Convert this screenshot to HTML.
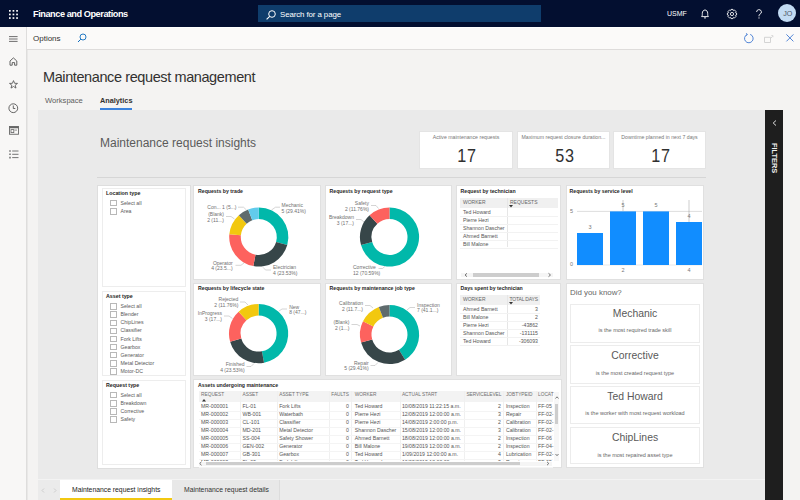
<!DOCTYPE html>
<html><head><meta charset="utf-8">
<style>
*{margin:0;padding:0;box-sizing:border-box}
html,body{width:800px;height:500px;overflow:hidden;background:#f4f3f2;font-family:"Liberation Sans",sans-serif;color:#333}
.a{position:absolute}
#top{left:0;top:0;width:800px;height:27px;background:#030f30}
#nav{left:0;top:27px;width:27px;height:473px;background:#f8f7f6;border-right:1px solid #dedddc;box-shadow:1px 0 0 #e9e8e7}
#opt{left:27px;top:27px;width:773px;height:23px;background:#fbfaf9;border-top:1px solid #fff;border-bottom:1px solid #dedcdb}
#report{left:38px;top:110px;width:727px;height:370px;background:#eaeaea}
#filters{left:765px;top:110px;width:18px;height:390px;background:#1e1e1e}
#tabbar{left:38px;top:479px;width:727px;height:21px;background:#ebebeb;border-top:1px solid #f3f3f3}
.box{position:absolute;background:#fff;border:1px solid #e3e3e3}
.t{position:absolute;white-space:nowrap;line-height:1}
.ttl{font-size:5.3px;font-weight:bold;color:#252423}
svg{position:absolute;overflow:visible}
</style></head><body>
<!-- TOP BAR -->
<div id="top" class="a">
  <svg style="left:9px;top:9.5px" width="9" height="9" viewBox="0 0 9 9"><g fill="#fff"><rect x="0" y="0" width="1.7" height="1.7"/><rect x="3.6" y="0" width="1.7" height="1.7"/><rect x="7.2" y="0" width="1.7" height="1.7"/><rect x="0" y="3.6" width="1.7" height="1.7"/><rect x="3.6" y="3.6" width="1.7" height="1.7"/><rect x="7.2" y="3.6" width="1.7" height="1.7"/><rect x="0" y="7.2" width="1.7" height="1.7"/><rect x="3.6" y="7.2" width="1.7" height="1.7"/><rect x="7.2" y="7.2" width="1.7" height="1.7"/></g></svg>
  <div class="t" style="left:33px;top:9.5px;font-size:9.2px;font-weight:bold;color:#fff;letter-spacing:-0.45px">Finance and Operations</div>
  <div class="a" style="left:258px;top:5px;width:283px;height:17px;background:#0f3d6c"></div>
  <svg style="left:265.5px;top:9.5px" width="10" height="10" viewBox="0 0 10 10"><circle cx="6" cy="4" r="3.3" fill="none" stroke="#fff" stroke-width="1"/><path d="M3.7 6.3 L0.6 9.4" stroke="#fff" stroke-width="1.1"/></svg>
  <div class="t" style="left:280px;top:10.6px;font-size:7.9px;color:#fff;letter-spacing:-0.1px">Search for a page</div>
  <div class="t" style="left:667px;top:9.5px;font-size:7px;color:#fff">USMF</div>
  <svg style="left:700px;top:8.5px" width="10" height="10" viewBox="0 0 10 10"><path d="M1.6 7.6C2.4 6.8 2.3 6 2.3 4.3C2.3 2.4 3.5 1 5 1C6.5 1 7.7 2.4 7.7 4.3C7.7 6 7.6 6.8 8.4 7.6Z" fill="none" stroke="#fff" stroke-width="0.9" stroke-linejoin="round"/><path d="M4 8.9H6" stroke="#fff" stroke-width="0.9"/></svg>
  <svg style="left:727px;top:8.5px" width="10" height="10" viewBox="0 0 10 10"><path d="M9.59 3.97L9.59 6.03L8.46 6.30L8.37 6.53L8.97 7.52L7.52 8.97L6.53 8.37L6.30 8.46L6.03 9.59L3.97 9.59L3.70 8.46L3.47 8.37L2.48 8.97L1.03 7.52L1.63 6.53L1.54 6.30L0.41 6.03L0.41 3.97L1.54 3.70L1.63 3.47L1.03 2.48L2.48 1.03L3.47 1.63L3.70 1.54L3.97 0.41L6.03 0.41L6.30 1.54L6.53 1.63L7.52 1.03L8.97 2.48L8.37 3.47L8.46 3.70Z" fill="none" stroke="#fff" stroke-width="0.85" stroke-linejoin="round"/><circle cx="5" cy="5" r="1.6" fill="none" stroke="#fff" stroke-width="0.85"/></svg>
  <svg style="left:755px;top:8.5px" width="8" height="10" viewBox="0 0 8 10"><path d="M1.6 3A2.4 2.4 0 1 1 5 5.2C4.2 5.6 4 6 4 6.8V7.3" fill="none" stroke="#fff" stroke-width="0.9"/><circle cx="4" cy="8.9" r="0.55" fill="#fff"/></svg>
  <div class="a" style="left:778px;top:4px;width:18px;height:18px;border-radius:50%;background:#c2dbf3"></div>
  <div class="t" style="left:783.3px;top:10px;font-size:7.2px;color:#505866;letter-spacing:-0.2px">JO</div>
</div>
<!-- NAV -->
<div id="nav" class="a">
  <svg style="left:9px;top:8.5px" width="9" height="6" viewBox="0 0 9 6"><path d="M0 0.6H8.6M0 3H8.6M0 5.4H8.6" stroke="#555" stroke-width="0.85"/></svg>
  <svg style="left:9px;top:29.8px" width="9" height="9" viewBox="0 0 9 9"><path d="M1 8.2V4L4.4 0.9L7.8 4V8.2H5.6V5.6H3.2V8.2Z" fill="none" stroke="#555" stroke-width="0.9" stroke-linejoin="round"/></svg>
  <svg style="left:9px;top:53px" width="9" height="9" viewBox="0 0 9 9"><path d="M4.5 0.6L5.6 3.3L8.5 3.4L6.2 5.2L7 8.1L4.5 6.5L2 8.1L2.8 5.2L0.5 3.4L3.4 3.3Z" fill="none" stroke="#555" stroke-width="0.85" stroke-linejoin="round"/></svg>
  <svg style="left:8px;top:75.5px" width="11" height="11" viewBox="0 0 11 11"><circle cx="5.3" cy="5.2" r="4.4" fill="none" stroke="#555" stroke-width="0.9"/><path d="M5.3 2.5V5.5H7.3" fill="none" stroke="#555" stroke-width="0.9"/></svg>
  <svg style="left:8.5px;top:99px" width="10" height="9" viewBox="0 0 10 9"><rect x="0.45" y="0.45" width="9" height="7.8" fill="none" stroke="#666" stroke-width="0.9"/><rect x="0.45" y="0.45" width="9" height="1.8" fill="#666"/><rect x="2" y="3.6" width="2.8" height="3" fill="none" stroke="#666" stroke-width="0.8"/><path d="M5.5 4.1H8" stroke="#666" stroke-width="0.7"/></svg>
  <svg style="left:8.5px;top:122.5px" width="10" height="9" viewBox="0 0 10 9"><path d="M3.2 1H9.5M3.2 4.3H9.5M3.2 7.6H9.5" stroke="#666" stroke-width="0.9"/><path d="M1 0.2V8.4" stroke="#666" stroke-width="1.4" stroke-dasharray="1.6 1.7"/></svg>
</div>
<!-- OPTIONS BAR -->
<div id="opt" class="a">
  <div class="t" style="left:6px;top:7.3px;font-size:8px;color:#323130">Options</div>
  <svg style="left:50px;top:5px" width="10" height="10" viewBox="0 0 10 10"><circle cx="6" cy="4" r="3" fill="none" stroke="#0f6cbd" stroke-width="0.9"/><path d="M3.8 6.2L1 9" stroke="#0f6cbd" stroke-width="1"/></svg>
  <svg style="left:716px;top:4.5px" width="11" height="11" viewBox="0 0 11 11"><path d="M4.2 1.5A4.3 4.3 0 1 0 7.2 1.4" fill="none" stroke="#4a7fd4" stroke-width="0.95"/><path d="M3.2 0.2L4.4 1.6L2.8 2.6" fill="none" stroke="#4a7fd4" stroke-width="0.9"/></svg>
  <svg style="left:737px;top:6px" width="10" height="9" viewBox="0 0 10 9"><path d="M0.5 3.3H6.5V8.5H0.5Z" fill="none" stroke="#cfcfcf" stroke-width="0.9"/><path d="M6.5 4.5L8.5 2.5M7.3 1.6H8.9V3.2" fill="none" stroke="#cfcfcf" stroke-width="0.8"/></svg>
  <svg style="left:758.8px;top:6px" width="8" height="8" viewBox="0 0 8 8"><path d="M0.4 0.4L7.4 7.4M7.4 0.4L0.4 7.4" stroke="#4a7fd4" stroke-width="0.95"/></svg>
</div>
<!-- PAGE HEADER -->
<div class="t" style="left:43px;top:69.7px;font-size:14.5px;letter-spacing:-0.4px;color:#323130">Maintenance request management</div>
<div class="t" style="left:45px;top:96.5px;font-size:7.6px;color:#605e5c">Workspace</div>
<div class="t" style="left:100px;top:96.5px;font-size:7.3px;font-weight:bold;color:#323130">Analytics</div>
<div class="a" style="left:100px;top:107.7px;width:32px;height:2px;background:#3b82dc"></div>

<!-- REPORT -->
<div id="report" class="a"></div>
<div class="t" style="top:137.35px;font-size:12px;color:#5a5a5a;left:100.00px;">Maintenance request insights</div><div class="a" style="left:419px;top:131px;width:94px;height:38px;background:#fff;border:1px solid #e4e4e4;"></div><div class="t" style="top:134.60px;font-size:5.2px;color:#777;left:466.00px;transform:translateX(-50%);">Active maintenance requests</div><div class="t" style="top:146.97px;font-size:18px;color:#303030;left:467.00px;transform:translateX(-50%);transform:translateX(-50%) scaleX(0.9);letter-spacing:0.8px;">17</div><div class="a" style="left:517px;top:131px;width:93px;height:38px;background:#fff;border:1px solid #e4e4e4;"></div><div class="t" style="top:134.60px;font-size:5.2px;color:#777;left:563.50px;transform:translateX(-50%);">Maximum request closure duration...</div><div class="t" style="top:146.97px;font-size:18px;color:#303030;left:564.50px;transform:translateX(-50%);transform:translateX(-50%) scaleX(0.9);letter-spacing:0.8px;">53</div><div class="a" style="left:613px;top:131px;width:93px;height:38px;background:#fff;border:1px solid #e4e4e4;"></div><div class="t" style="top:134.60px;font-size:5.2px;color:#777;left:659.50px;transform:translateX(-50%);">Downtime planned in next 7 days</div><div class="t" style="top:146.97px;font-size:18px;color:#303030;left:660.50px;transform:translateX(-50%);transform:translateX(-50%) scaleX(0.9);letter-spacing:0.8px;">17</div><div class="a" style="left:97px;top:177px;width:609px;height:1px;background:#d6d6d6;"></div><div class="a" style="left:97px;top:185px;width:94px;height:284px;background:#fff;border:1px solid #dedede;"></div><div class="a" style="left:102px;top:188px;width:84px;height:99px;background:#fff;border:1px solid #ededed;"></div><div class="a" style="left:102px;top:291px;width:84px;height:85px;background:#fff;border:1px solid #ededed;"></div><div class="a" style="left:102px;top:380px;width:84px;height:85px;background:#fff;border:1px solid #ededed;"></div><div class="t" style="top:190.82px;font-size:5.3px;color:#252423;font-weight:bold;left:106.00px;">Location type</div><div class="a" style="left:110px;top:200.10000000000002px;width:6.5px;height:6.399999999999977px;background:#fff;border:1px solid #b8b8b8;"></div><div class="t" style="top:200.80px;font-size:5.2px;color:#5a5a5a;left:120.50px;">Select all</div><div class="a" style="left:110px;top:208.25000000000003px;width:6.5px;height:6.399999999999977px;background:#fff;border:1px solid #b8b8b8;"></div><div class="t" style="top:208.95px;font-size:5.2px;color:#5a5a5a;left:120.50px;">Area</div><div class="t" style="top:293.52px;font-size:5.3px;color:#252423;font-weight:bold;left:106.00px;">Asset type</div><div class="a" style="left:110px;top:303.2px;width:6.5px;height:6.399999999999977px;background:#fff;border:1px solid #b8b8b8;"></div><div class="t" style="top:303.90px;font-size:5.2px;color:#5a5a5a;left:120.50px;">Select all</div><div class="a" style="left:110px;top:311.34999999999997px;width:6.5px;height:6.399999999999977px;background:#fff;border:1px solid #b8b8b8;"></div><div class="t" style="top:312.05px;font-size:5.2px;color:#5a5a5a;left:120.50px;">Blender</div><div class="a" style="left:110px;top:319.5px;width:6.5px;height:6.399999999999977px;background:#fff;border:1px solid #b8b8b8;"></div><div class="t" style="top:320.20px;font-size:5.2px;color:#5a5a5a;left:120.50px;">ChipLines</div><div class="a" style="left:110px;top:327.65px;width:6.5px;height:6.399999999999977px;background:#fff;border:1px solid #b8b8b8;"></div><div class="t" style="top:328.35px;font-size:5.2px;color:#5a5a5a;left:120.50px;">Classifier</div><div class="a" style="left:110px;top:335.8px;width:6.5px;height:6.399999999999977px;background:#fff;border:1px solid #b8b8b8;"></div><div class="t" style="top:336.50px;font-size:5.2px;color:#5a5a5a;left:120.50px;">Fork Lifts</div><div class="a" style="left:110px;top:343.95px;width:6.5px;height:6.399999999999977px;background:#fff;border:1px solid #b8b8b8;"></div><div class="t" style="top:344.65px;font-size:5.2px;color:#5a5a5a;left:120.50px;">Gearbox</div><div class="a" style="left:110px;top:352.09999999999997px;width:6.5px;height:6.399999999999977px;background:#fff;border:1px solid #b8b8b8;"></div><div class="t" style="top:352.80px;font-size:5.2px;color:#5a5a5a;left:120.50px;">Generator</div><div class="a" style="left:110px;top:360.25px;width:6.5px;height:6.399999999999977px;background:#fff;border:1px solid #b8b8b8;"></div><div class="t" style="top:360.95px;font-size:5.2px;color:#5a5a5a;left:120.50px;">Metal Detector</div><div class="a" style="left:110px;top:368.4px;width:6.5px;height:6.399999999999977px;background:#fff;border:1px solid #b8b8b8;"></div><div class="t" style="top:369.10px;font-size:5.2px;color:#5a5a5a;left:120.50px;">Motor-DC</div><div class="t" style="top:382.52px;font-size:5.3px;color:#252423;font-weight:bold;left:106.00px;">Request type</div><div class="a" style="left:110px;top:392.0px;width:6.5px;height:6.399999999999977px;background:#fff;border:1px solid #b8b8b8;"></div><div class="t" style="top:392.70px;font-size:5.2px;color:#5a5a5a;left:120.50px;">Select all</div><div class="a" style="left:110px;top:400.15px;width:6.5px;height:6.399999999999977px;background:#fff;border:1px solid #b8b8b8;"></div><div class="t" style="top:400.85px;font-size:5.2px;color:#5a5a5a;left:120.50px;">Breakdown</div><div class="a" style="left:110px;top:408.3px;width:6.5px;height:6.399999999999977px;background:#fff;border:1px solid #b8b8b8;"></div><div class="t" style="top:409.00px;font-size:5.2px;color:#5a5a5a;left:120.50px;">Corrective</div><div class="a" style="left:110px;top:416.45px;width:6.5px;height:6.399999999999977px;background:#fff;border:1px solid #b8b8b8;"></div><div class="t" style="top:417.15px;font-size:5.2px;color:#5a5a5a;left:120.50px;">Safety</div><div class="a" style="left:193px;top:185px;width:128px;height:95px;background:#fff;border:1px solid #e0e0e0;"></div><div class="a" style="left:325px;top:185px;width:127px;height:95px;background:#fff;border:1px solid #e0e0e0;"></div><div class="a" style="left:456px;top:185px;width:105px;height:95px;background:#fff;border:1px solid #e0e0e0;"></div><div class="a" style="left:566px;top:185px;width:138px;height:95px;background:#fff;border:1px solid #e0e0e0;"></div><div class="a" style="left:193px;top:283px;width:128px;height:93px;background:#fff;border:1px solid #e0e0e0;"></div><div class="a" style="left:325px;top:283px;width:127px;height:93px;background:#fff;border:1px solid #e0e0e0;"></div><div class="a" style="left:456px;top:283px;width:105px;height:93px;background:#fff;border:1px solid #e0e0e0;"></div><div class="a" style="left:566px;top:283px;width:138px;height:185px;background:#fff;border:1px solid #e0e0e0;"></div><div class="a" style="left:193px;top:379px;width:369px;height:89px;background:#fff;border:1px solid #e0e0e0;"></div><div class="t" style="top:189.20px;font-size:5.2px;color:#252423;font-weight:bold;left:198.00px;">Requests by trade</div><div class="t" style="top:189.20px;font-size:5.2px;color:#252423;font-weight:bold;left:329.50px;">Requests by request type</div><div class="t" style="top:189.20px;font-size:5.2px;color:#252423;font-weight:bold;left:460.50px;">Request by technician</div><div class="t" style="top:189.00px;font-size:5.2px;color:#252423;font-weight:bold;left:569.50px;">Requests by service level</div><div class="t" style="top:286.20px;font-size:5.2px;color:#252423;font-weight:bold;left:198.00px;">Requests by lifecycle state</div><div class="t" style="top:286.20px;font-size:5.2px;color:#252423;font-weight:bold;left:329.50px;">Requests by maintenance job type</div><div class="t" style="top:286.20px;font-size:5.2px;color:#252423;font-weight:bold;left:460.50px;">Days spent by technician</div><div class="t" style="top:382.50px;font-size:5.2px;color:#252423;font-weight:bold;left:198.00px;">Assets undergoing maintenance</div><svg class="a" style="left:0;top:0" width="800" height="500" viewBox="0 0 800 500"><path d="M258.80 207.40A29.6 29.6 0 0 1 287.27 245.10L276.11 241.93A18 18 0 0 0 258.80 219.00Z" fill="#01b8aa"/><path d="M287.27 245.10A29.6 29.6 0 0 1 253.36 266.10L255.49 254.69A18 18 0 0 0 276.11 241.93Z" fill="#374649"/><path d="M253.36 266.10A29.6 29.6 0 0 1 229.33 234.27L240.88 235.34A18 18 0 0 0 255.49 254.69Z" fill="#fd625e"/><path d="M229.33 234.27A29.6 29.6 0 0 1 238.86 215.13L246.67 223.70A18 18 0 0 0 240.88 235.34Z" fill="#f2c80f"/><path d="M238.86 215.13A29.6 29.6 0 0 1 248.11 209.40L252.30 220.22A18 18 0 0 0 246.67 223.70Z" fill="#5f6b6d"/><path d="M248.11 209.40A29.6 29.6 0 0 1 258.80 207.40L258.80 219.00A18 18 0 0 0 252.30 220.22Z" fill="#62cbec"/><path d="M389.50 207.40A29.6 29.6 0 1 1 361.03 245.10L372.19 241.93A18 18 0 1 0 389.50 219.00Z" fill="#01b8aa"/><path d="M361.03 245.10A29.6 29.6 0 0 1 369.56 215.13L377.37 223.70A18 18 0 0 0 372.19 241.93Z" fill="#374649"/><path d="M369.56 215.13A29.6 29.6 0 0 1 389.50 207.40L389.50 219.00A18 18 0 0 0 377.37 223.70Z" fill="#fd625e"/><path d="M258.60 304.00A29.6 29.6 0 0 1 264.04 362.70L261.91 351.29A18 18 0 0 0 258.60 315.60Z" fill="#01b8aa"/><path d="M264.04 362.70A29.6 29.6 0 0 1 230.13 341.70L241.29 338.53A18 18 0 0 0 261.91 351.29Z" fill="#374649"/><path d="M230.13 341.70A29.6 29.6 0 0 1 238.66 311.73L246.47 320.30A18 18 0 0 0 241.29 338.53Z" fill="#fd625e"/><path d="M238.66 311.73A29.6 29.6 0 0 1 258.60 304.00L258.60 315.60A18 18 0 0 0 246.47 320.30Z" fill="#f2c80f"/><path d="M389.50 304.90A29.6 29.6 0 0 1 405.08 359.67L398.98 349.80A18 18 0 0 0 389.50 316.50Z" fill="#01b8aa"/><path d="M405.08 359.67A29.6 29.6 0 0 1 361.03 342.60L372.19 339.43A18 18 0 0 0 398.98 349.80Z" fill="#374649"/><path d="M361.03 342.60A29.6 29.6 0 0 1 363.00 321.31L373.39 326.48A18 18 0 0 0 372.19 339.43Z" fill="#fd625e"/><path d="M363.00 321.31A29.6 29.6 0 0 1 378.81 306.90L383.00 317.72A18 18 0 0 0 373.39 326.48Z" fill="#f2c80f"/><path d="M378.81 306.90A29.6 29.6 0 0 1 389.50 304.90L389.50 316.50A18 18 0 0 0 383.00 317.72Z" fill="#5f6b6d"/><path d="M280 207.2L275.5 207.2L271.5 210" stroke="#b8b8b8" stroke-width="0.6" fill="none"/><path d="M238 207.2L243.5 207.2L246.5 210" stroke="#b8b8b8" stroke-width="0.6" fill="none"/><path d="M226 216.5L231 216.5L234.5 219" stroke="#b8b8b8" stroke-width="0.6" fill="none"/><path d="M235.5 265.3L241 265.3L244 263" stroke="#b8b8b8" stroke-width="0.6" fill="none"/><path d="M271 270L265.5 270L263 267.3" stroke="#b8b8b8" stroke-width="0.6" fill="none"/><path d="M371 205.5L376 205.5L378.5 208.5" stroke="#b8b8b8" stroke-width="0.6" fill="none"/><path d="M356 219.5L361 219.5L364 222" stroke="#b8b8b8" stroke-width="0.6" fill="none"/><path d="M378.5 268.5L382.5 268.5L385 266.3" stroke="#b8b8b8" stroke-width="0.6" fill="none"/><path d="M240 302L245 302L248 305" stroke="#b8b8b8" stroke-width="0.6" fill="none"/><path d="M224 316L229 316L232.5 318.5" stroke="#b8b8b8" stroke-width="0.6" fill="none"/><path d="M287 309L282 309L279 311" stroke="#b8b8b8" stroke-width="0.6" fill="none"/><path d="M246.5 366.5L251 366.5L254 363.5" stroke="#b8b8b8" stroke-width="0.6" fill="none"/><path d="M365 305.5L370 305.5L373 308" stroke="#b8b8b8" stroke-width="0.6" fill="none"/><path d="M351.5 324.5L357 324.5L360 326" stroke="#b8b8b8" stroke-width="0.6" fill="none"/><path d="M415 307.5L410 307.5L407 310" stroke="#b8b8b8" stroke-width="0.6" fill="none"/><path d="M370.5 365.5L375 365.5L378 362.5" stroke="#b8b8b8" stroke-width="0.6" fill="none"/><path d="M577 211.4H702" stroke="#d0d0d0" stroke-width="0.7"/><path d="M577 265H702" stroke="#e0e0e0" stroke-width="0.7"/><rect x="577" y="233" width="26" height="32" fill="#118dff"/><rect x="610" y="211.4" width="26" height="53.599999999999994" fill="#118dff"/><rect x="643" y="211.4" width="26" height="53.599999999999994" fill="#118dff"/><rect x="676" y="222" width="26" height="43" fill="#118dff"/><path d="M623 200V211M689 200V222" stroke="#999" stroke-width="0.5"/></svg><div class="t" style="top:202.97px;font-size:5px;color:#707070;left:281.50px;">Mechanic</div><div class="t" style="top:208.67px;font-size:5px;color:#707070;left:281.50px;">5 (29.41%)</div><div class="t" style="top:204.97px;font-size:5px;color:#707070;right:563.50px;">Con... 1 (5...)</div><div class="t" style="top:211.97px;font-size:5px;color:#707070;right:576.00px;">(Blank)</div><div class="t" style="top:217.67px;font-size:5px;color:#707070;right:576.00px;">2 (11...)</div><div class="t" style="top:260.57px;font-size:5px;color:#707070;right:567.40px;">Operator</div><div class="t" style="top:266.27px;font-size:5px;color:#707070;right:567.40px;">4 (23.5...)</div><div class="t" style="top:265.17px;font-size:5px;color:#707070;left:273.00px;">Electrician</div><div class="t" style="top:270.87px;font-size:5px;color:#707070;left:273.00px;">4 (23.53%)</div><div class="t" style="top:200.97px;font-size:5px;color:#707070;right:431.00px;">Safety</div><div class="t" style="top:206.67px;font-size:5px;color:#707070;right:431.00px;">2 (11.76%)</div><div class="t" style="top:214.97px;font-size:5px;color:#707070;right:446.00px;">Breakdown</div><div class="t" style="top:220.67px;font-size:5px;color:#707070;right:446.00px;">3 (17...)</div><div class="t" style="top:265.17px;font-size:5px;color:#707070;left:353.00px;">Corrective</div><div class="t" style="top:270.87px;font-size:5px;color:#707070;left:353.00px;">12 (70.59%)</div><div class="t" style="top:297.37px;font-size:5px;color:#707070;right:561.70px;">Rejected</div><div class="t" style="top:303.07px;font-size:5px;color:#707070;right:561.70px;">2 (11.76%)</div><div class="t" style="top:311.47px;font-size:5px;color:#707070;right:578.00px;">InProgress</div><div class="t" style="top:317.17px;font-size:5px;color:#707070;right:578.00px;">3 (17...)</div><div class="t" style="top:304.57px;font-size:5px;color:#707070;left:289.20px;">New</div><div class="t" style="top:310.27px;font-size:5px;color:#707070;left:289.20px;">8 (47...)</div><div class="t" style="top:361.87px;font-size:5px;color:#707070;right:555.40px;">Finished</div><div class="t" style="top:367.57px;font-size:5px;color:#707070;right:555.40px;">4 (23.53%)</div><div class="t" style="top:300.97px;font-size:5px;color:#707070;right:437.00px;">Calibration</div><div class="t" style="top:306.67px;font-size:5px;color:#707070;right:437.00px;">2 (11.7...)</div><div class="t" style="top:319.87px;font-size:5px;color:#707070;right:450.60px;">(Blank)</div><div class="t" style="top:325.57px;font-size:5px;color:#707070;right:450.60px;">2 (1...)</div><div class="t" style="top:302.57px;font-size:5px;color:#707070;left:417.00px;">Inspection</div><div class="t" style="top:308.27px;font-size:5px;color:#707070;left:417.00px;">7 (41.1...)</div><div class="t" style="top:360.77px;font-size:5px;color:#707070;right:431.30px;">Repair</div><div class="t" style="top:366.47px;font-size:5px;color:#707070;right:431.30px;">5 (29.41%)</div><div class="t" style="top:208.55px;font-size:5.5px;color:#777;left:570.00px;">5</div><div class="t" style="top:262.35px;font-size:5.5px;color:#777;left:570.00px;">0</div><div class="t" style="top:224.85px;font-size:5.5px;color:#777;left:590.00px;transform:translateX(-50%);">3</div><div class="t" style="top:202.85px;font-size:5.5px;color:#777;left:623.00px;transform:translateX(-50%);">5</div><div class="t" style="top:202.85px;font-size:5.5px;color:#777;left:656.00px;transform:translateX(-50%);">5</div><div class="t" style="top:213.85px;font-size:5.5px;color:#777;left:689.00px;transform:translateX(-50%);">4</div><div class="t" style="top:268.35px;font-size:5.5px;color:#777;left:623.00px;transform:translateX(-50%);">2</div><div class="t" style="top:268.35px;font-size:5.5px;color:#777;left:689.00px;transform:translateX(-50%);">4</div><div class="a" style="left:460px;top:197.5px;width:98px;height:10.0px;background:#f0f0f0;"></div><div class="a" style="left:507px;top:197.5px;width:0.6000000000000227px;height:49.5px;background:#e6e6e6;"></div><div class="t" style="top:199.77px;font-size:5px;color:#666;left:463.00px;">WORKER</div><div class="t" style="top:199.77px;font-size:5px;color:#666;left:510.00px;">REQUESTS</div><svg class="a" style="left:509px;top:204.5px" width="4" height="3" viewBox="0 0 4 3"><path d="M0 0H4L2 2.5Z" fill="#333"/></svg><div class="t" style="top:209.50px;font-size:5.2px;color:#555;left:463.00px;">Ted Howard</div><div class="a" style="left:460px;top:216.0px;width:98px;height:0.5px;background:#f2f2f2;"></div><div class="t" style="top:217.60px;font-size:5.2px;color:#555;left:463.00px;">Pierre Hezi</div><div class="a" style="left:460px;top:224.1px;width:98px;height:0.5px;background:#f2f2f2;"></div><div class="t" style="top:225.70px;font-size:5.2px;color:#555;left:463.00px;">Shannon Dascher</div><div class="a" style="left:460px;top:232.2px;width:98px;height:0.5px;background:#f2f2f2;"></div><div class="t" style="top:233.80px;font-size:5.2px;color:#555;left:463.00px;">Ahmed Barnett</div><div class="a" style="left:460px;top:240.3px;width:98px;height:0.5px;background:#f2f2f2;"></div><div class="t" style="top:241.90px;font-size:5.2px;color:#555;left:463.00px;">Bill Malone</div><div class="a" style="left:460px;top:248.4px;width:98px;height:0.5px;background:#f2f2f2;"></div><div class="a" style="left:461px;top:273px;width:92px;height:4px;background:#f5f5f5;"></div><div class="a" style="left:473px;top:273.2px;width:66px;height:3.6000000000000227px;background:#cdcdcd;"></div><svg class="a" style="left:464px;top:273px" width="90" height="4" viewBox="0 0 90 4"><path d="M3 0.3L1 2L3 3.7M84.5 0.3L86.5 2L84.5 3.7" fill="none" stroke="#555" stroke-width="0.8"/></svg><div class="a" style="left:460px;top:295px;width:80px;height:9.5px;background:#f0f0f0;"></div><div class="a" style="left:507px;top:295px;width:0.6000000000000227px;height:50px;background:#e6e6e6;"></div><div class="t" style="top:297.27px;font-size:5px;color:#666;left:463.00px;">WORKER</div><div class="t" style="top:297.27px;font-size:5px;color:#666;right:262.00px;letter-spacing:-0.15px;">TOTAL DAYS</div><svg class="a" style="left:509px;top:302px" width="4" height="3" viewBox="0 0 4 3"><path d="M0 0H4L2 2.5Z" fill="#333"/></svg><div class="t" style="top:306.50px;font-size:5.2px;color:#555;left:463.00px;">Ahmed Barnett</div><div class="t" style="top:306.50px;font-size:5.2px;color:#555;right:262.00px;">3</div><div class="a" style="left:460px;top:313.0px;width:80px;height:0.5px;background:#f2f2f2;"></div><div class="t" style="top:314.60px;font-size:5.2px;color:#555;left:463.00px;">Bill Malone</div><div class="t" style="top:314.60px;font-size:5.2px;color:#555;right:262.00px;">2</div><div class="a" style="left:460px;top:321.1px;width:80px;height:0.5px;background:#f2f2f2;"></div><div class="t" style="top:322.70px;font-size:5.2px;color:#555;left:463.00px;">Pierre Hezi</div><div class="t" style="top:322.70px;font-size:5.2px;color:#555;right:262.00px;">-43862</div><div class="a" style="left:460px;top:329.2px;width:80px;height:0.5px;background:#f2f2f2;"></div><div class="t" style="top:330.80px;font-size:5.2px;color:#555;left:463.00px;">Shannon Dascher</div><div class="t" style="top:330.80px;font-size:5.2px;color:#555;right:262.00px;">-131115</div><div class="a" style="left:460px;top:337.3px;width:80px;height:0.5px;background:#f2f2f2;"></div><div class="t" style="top:338.90px;font-size:5.2px;color:#555;left:463.00px;">Ted Howard</div><div class="t" style="top:338.90px;font-size:5.2px;color:#555;right:262.00px;">-306093</div><div class="a" style="left:460px;top:345.4px;width:80px;height:0.5px;background:#f2f2f2;"></div><div class="t" style="top:288.82px;font-size:7.9px;color:#666;left:570.00px;">Did you know?</div><div class="a" style="left:570px;top:304px;width:130px;height:39px;background:#fff;border:1px solid #ececec;"></div><div class="t" style="top:309.00px;font-size:10.4px;color:#595959;left:635.00px;transform:translateX(-50%);">Mechanic</div><div class="t" style="top:328.15px;font-size:5.5px;color:#666;left:635.00px;transform:translateX(-50%);">is the most required trade skill</div><div class="a" style="left:570px;top:345px;width:130px;height:39px;background:#fff;border:1px solid #ececec;"></div><div class="t" style="top:351.20px;font-size:10.4px;color:#595959;left:635.00px;transform:translateX(-50%);">Corrective</div><div class="t" style="top:370.55px;font-size:5.5px;color:#666;left:635.00px;transform:translateX(-50%);">is the most created request type</div><div class="a" style="left:570px;top:386px;width:130px;height:38px;background:#fff;border:1px solid #ececec;"></div><div class="t" style="top:392.00px;font-size:10.4px;color:#595959;left:635.00px;transform:translateX(-50%);">Ted Howard</div><div class="t" style="top:410.75px;font-size:5.5px;color:#666;left:635.00px;transform:translateX(-50%);">is the worker with most request workload</div><div class="a" style="left:570px;top:427px;width:130px;height:37px;background:#fff;border:1px solid #ececec;"></div><div class="t" style="top:433.40px;font-size:10.4px;color:#595959;left:635.00px;transform:translateX(-50%);">ChipLines</div><div class="t" style="top:453.35px;font-size:5.5px;color:#666;left:635.00px;transform:translateX(-50%);">is the most repaired asset type</div><div class="a" style="left:198.5px;top:390.5px;width:354.5px;height:11.0px;background:#f3f3f3;"></div><div class="t" style="top:393.44px;font-size:4.8px;color:#707070;left:201.00px;">REQUEST</div><div class="t" style="top:393.44px;font-size:4.8px;color:#707070;left:242.50px;">ASSET</div><div class="t" style="top:393.44px;font-size:4.8px;color:#707070;left:279.20px;">ASSET TYPE</div><div class="t" style="top:393.44px;font-size:4.8px;color:#707070;right:451.00px;">FAULTS</div><div class="t" style="top:393.44px;font-size:4.8px;color:#707070;left:354.80px;">WORKER</div><div class="t" style="top:393.44px;font-size:4.8px;color:#707070;left:401.90px;">ACTUAL START</div><div class="t" style="top:393.44px;font-size:4.8px;color:#707070;left:466.50px;letter-spacing:-0.1px;">SERVICELEVEL</div><div class="t" style="top:393.44px;font-size:4.8px;color:#707070;left:505.90px;">JOBTYPEID</div><div class="t" style="top:393.44px;font-size:4.8px;color:#707070;left:538.00px;">LOCAT</div><svg class="a" style="left:202px;top:399px" width="4" height="3" viewBox="0 0 4 3"><path d="M0 2.5H4L2 0Z" fill="#333"/></svg><div class="a" style="left:240px;top:390.5px;width:0.5999999999999943px;height:72.5px;background:#f0f0f0;"></div><div class="a" style="left:276.6px;top:390.5px;width:0.6000000000000227px;height:72.5px;background:#f0f0f0;"></div><div class="a" style="left:329px;top:390.5px;width:0.6000000000000227px;height:72.5px;background:#f0f0f0;"></div><div class="a" style="left:351.4px;top:390.5px;width:0.6000000000000227px;height:72.5px;background:#f0f0f0;"></div><div class="a" style="left:399.7px;top:390.5px;width:0.6000000000000227px;height:72.5px;background:#f0f0f0;"></div><div class="a" style="left:464.3px;top:390.5px;width:0.6000000000000227px;height:72.5px;background:#f0f0f0;"></div><div class="a" style="left:503px;top:390.5px;width:0.6000000000000227px;height:72.5px;background:#f0f0f0;"></div><div class="a" style="left:535.6px;top:390.5px;width:0.6000000000000227px;height:72.5px;background:#f0f0f0;"></div><div class="t" style="top:404.00px;font-size:5.2px;color:#555;left:201.00px;">MR-000001</div><div class="t" style="top:404.00px;font-size:5.2px;color:#555;left:242.50px;">FL-01</div><div class="t" style="top:404.00px;font-size:5.2px;color:#555;left:279.20px;">Fork Lifts</div><div class="t" style="top:404.00px;font-size:5.2px;color:#555;right:451.00px;">0</div><div class="t" style="top:404.00px;font-size:5.2px;color:#555;left:354.80px;">Ted Howard</div><div class="t" style="top:404.00px;font-size:5.2px;color:#555;left:401.90px;">10/08/2019 11:22:15 a.m.</div><div class="t" style="top:404.00px;font-size:5.2px;color:#555;right:299.00px;">2</div><div class="t" style="top:404.00px;font-size:5.2px;color:#555;left:505.90px;">Inspection</div><div class="t" style="top:404.00px;font-size:5.2px;color:#555;left:538.00px;">FF-05</div><div class="a" style="left:198.5px;top:410.5px;width:354.5px;height:0.5px;background:#f4f4f4;"></div><div class="t" style="top:412.00px;font-size:5.2px;color:#555;left:201.00px;">MR-000002</div><div class="t" style="top:412.00px;font-size:5.2px;color:#555;left:242.50px;">WB-001</div><div class="t" style="top:412.00px;font-size:5.2px;color:#555;left:279.20px;">Waterbath</div><div class="t" style="top:412.00px;font-size:5.2px;color:#555;right:451.00px;">0</div><div class="t" style="top:412.00px;font-size:5.2px;color:#555;left:354.80px;">Pierre Hezi</div><div class="t" style="top:412.00px;font-size:5.2px;color:#555;left:401.90px;">12/08/2019 12:00:00 a.m.</div><div class="t" style="top:412.00px;font-size:5.2px;color:#555;right:299.00px;">3</div><div class="t" style="top:412.00px;font-size:5.2px;color:#555;left:505.90px;">Repair</div><div class="t" style="top:412.00px;font-size:5.2px;color:#555;left:538.00px;">FF-02-</div><div class="a" style="left:198.5px;top:418.5px;width:354.5px;height:0.5px;background:#f4f4f4;"></div><div class="t" style="top:420.00px;font-size:5.2px;color:#555;left:201.00px;">MR-000003</div><div class="t" style="top:420.00px;font-size:5.2px;color:#555;left:242.50px;">CL-101</div><div class="t" style="top:420.00px;font-size:5.2px;color:#555;left:279.20px;">Classifier</div><div class="t" style="top:420.00px;font-size:5.2px;color:#555;right:451.00px;">0</div><div class="t" style="top:420.00px;font-size:5.2px;color:#555;left:354.80px;">Pierre Hezi</div><div class="t" style="top:420.00px;font-size:5.2px;color:#555;left:401.90px;">14/08/2019 2:00:00 p.m.</div><div class="t" style="top:420.00px;font-size:5.2px;color:#555;right:299.00px;">2</div><div class="t" style="top:420.00px;font-size:5.2px;color:#555;left:505.90px;">Calibration</div><div class="t" style="top:420.00px;font-size:5.2px;color:#555;left:538.00px;">FF-02-</div><div class="a" style="left:198.5px;top:426.5px;width:354.5px;height:0.5px;background:#f4f4f4;"></div><div class="t" style="top:428.00px;font-size:5.2px;color:#555;left:201.00px;">MR-000004</div><div class="t" style="top:428.00px;font-size:5.2px;color:#555;left:242.50px;">MD-201</div><div class="t" style="top:428.00px;font-size:5.2px;color:#555;left:279.20px;">Metal Detector</div><div class="t" style="top:428.00px;font-size:5.2px;color:#555;right:451.00px;">0</div><div class="t" style="top:428.00px;font-size:5.2px;color:#555;left:354.80px;">Shannon Dascher</div><div class="t" style="top:428.00px;font-size:5.2px;color:#555;left:401.90px;">15/08/2019 12:00:00 a.m.</div><div class="t" style="top:428.00px;font-size:5.2px;color:#555;right:299.00px;">3</div><div class="t" style="top:428.00px;font-size:5.2px;color:#555;left:505.90px;">Calibration</div><div class="t" style="top:428.00px;font-size:5.2px;color:#555;left:538.00px;">FF-02-</div><div class="a" style="left:198.5px;top:434.5px;width:354.5px;height:0.5px;background:#f4f4f4;"></div><div class="t" style="top:436.00px;font-size:5.2px;color:#555;left:201.00px;">MR-000005</div><div class="t" style="top:436.00px;font-size:5.2px;color:#555;left:242.50px;">SS-004</div><div class="t" style="top:436.00px;font-size:5.2px;color:#555;left:279.20px;">Safety Shower</div><div class="t" style="top:436.00px;font-size:5.2px;color:#555;right:451.00px;">0</div><div class="t" style="top:436.00px;font-size:5.2px;color:#555;left:354.80px;">Ahmed Barnett</div><div class="t" style="top:436.00px;font-size:5.2px;color:#555;left:401.90px;">18/08/2019 12:00:00 a.m.</div><div class="t" style="top:436.00px;font-size:5.2px;color:#555;right:299.00px;">2</div><div class="t" style="top:436.00px;font-size:5.2px;color:#555;left:505.90px;">Inspection</div><div class="t" style="top:436.00px;font-size:5.2px;color:#555;left:538.00px;">FF-06</div><div class="a" style="left:198.5px;top:442.5px;width:354.5px;height:0.5px;background:#f4f4f4;"></div><div class="t" style="top:444.00px;font-size:5.2px;color:#555;left:201.00px;">MR-000006</div><div class="t" style="top:444.00px;font-size:5.2px;color:#555;left:242.50px;">GEN-002</div><div class="t" style="top:444.00px;font-size:5.2px;color:#555;left:279.20px;">Generator</div><div class="t" style="top:444.00px;font-size:5.2px;color:#555;right:451.00px;">0</div><div class="t" style="top:444.00px;font-size:5.2px;color:#555;left:354.80px;">Bill Malone</div><div class="t" style="top:444.00px;font-size:5.2px;color:#555;left:401.90px;">19/08/2019 12:00:00 a.m.</div><div class="t" style="top:444.00px;font-size:5.2px;color:#555;right:299.00px;">2</div><div class="t" style="top:444.00px;font-size:5.2px;color:#555;left:505.90px;">Inspection</div><div class="t" style="top:444.00px;font-size:5.2px;color:#555;left:538.00px;">FF-04-</div><div class="a" style="left:198.5px;top:450.5px;width:354.5px;height:0.5px;background:#f4f4f4;"></div><div class="t" style="top:452.00px;font-size:5.2px;color:#555;left:201.00px;">MR-000007</div><div class="t" style="top:452.00px;font-size:5.2px;color:#555;left:242.50px;">GB-301</div><div class="t" style="top:452.00px;font-size:5.2px;color:#555;left:279.20px;">Gearbox</div><div class="t" style="top:452.00px;font-size:5.2px;color:#555;right:451.00px;">0</div><div class="t" style="top:452.00px;font-size:5.2px;color:#555;left:354.80px;">Ted Howard</div><div class="t" style="top:452.00px;font-size:5.2px;color:#555;left:401.90px;">1/09/2019 12:00:00 a.m.</div><div class="t" style="top:452.00px;font-size:5.2px;color:#555;right:299.00px;">4</div><div class="t" style="top:452.00px;font-size:5.2px;color:#555;left:505.90px;">Lubrication</div><div class="t" style="top:452.00px;font-size:5.2px;color:#555;left:538.00px;">FF-02-</div><div class="a" style="left:198.5px;top:458.5px;width:354.5px;height:0.5px;background:#f4f4f4;"></div><div class="t" style="top:460.00px;font-size:5.2px;color:#555;left:201.00px;">MR-000008</div><div class="t" style="top:460.00px;font-size:5.2px;color:#555;left:242.50px;">FL-05</div><div class="t" style="top:460.00px;font-size:5.2px;color:#555;left:279.20px;">Fork Lifts</div><div class="t" style="top:460.00px;font-size:5.2px;color:#555;right:451.00px;">0</div><div class="t" style="top:460.00px;font-size:5.2px;color:#555;left:354.80px;">Ted Howard</div><div class="t" style="top:460.00px;font-size:5.2px;color:#555;left:401.90px;">10/09/2019 12:00:00 a.m.</div><div class="t" style="top:460.00px;font-size:5.2px;color:#555;right:299.00px;">3</div><div class="t" style="top:460.00px;font-size:5.2px;color:#555;left:505.90px;">Repair</div><div class="t" style="top:460.00px;font-size:5.2px;color:#555;left:538.00px;">FF-05</div><div class="a" style="left:198.5px;top:466.5px;width:354.5px;height:0.5px;background:#f4f4f4;"></div><div class="a" style="left:198.5px;top:461px;width:354.5px;height:6px;background:#fff;"></div><div class="a" style="left:199px;top:461.5px;width:353px;height:4.0px;background:#f5f5f5;"></div><div class="a" style="left:206px;top:461.8px;width:314px;height:3.3999999999999773px;background:#cdcdcd;"></div><div class="a" style="left:554px;top:392px;width:5px;height:69px;background:#f7f7f7;"></div><div class="a" style="left:555px;top:403.8px;width:3px;height:19.899999999999977px;background:#cdcdcd;"></div><svg class="a" style="left:198px;top:392px" width="362" height="74" viewBox="0 0 362 74"><path d="M357.5 6.5L359 4.8L360.5 6.5M357.5 62L359 63.7L360.5 62M349 69.8L350.8 71.5L349 73.2M3.5 69.8L1.7 71.5L3.5 73.2" fill="none" stroke="#555" stroke-width="0.8"/></svg>
<div id="filters" class="a">
  <svg style="left:6.5px;top:9.5px" width="5" height="6" viewBox="0 0 5 6"><path d="M4 0.5L1.2 3L4 5.5" fill="none" stroke="#ddd" stroke-width="1"/></svg>
  <div class="t" style="top:33px;font-size:7.4px;font-weight:bold;color:#f0f0f0;transform:rotate(90deg);transform-origin:0 0;left:13px">FILTERS</div>
</div>
<div id="tabbar" class="a">
  <svg style="left:3px;top:8px" width="4" height="5" viewBox="0 0 4 5"><path d="M3 0.5L1 2.5L3 4.5" fill="none" stroke="#c4c4c4" stroke-width="0.8"/></svg>
  <svg style="left:15px;top:8px" width="4" height="5" viewBox="0 0 4 5"><path d="M1 0.5L3 2.5L1 4.5" fill="none" stroke="#c4c4c4" stroke-width="0.8"/></svg>
  <div class="a" style="left:22px;top:0;width:112px;height:20px;background:#fff;border-bottom:2px solid #f2c811"></div>
  <div class="t" style="left:34px;top:7px;font-size:6.8px;color:#222">Maintenance request insights</div>
  <div class="a" style="left:134px;top:0;width:108px;height:20px;background:#e8e8e8;border-right:1px solid #dcdcdc"></div>
  <div class="t" style="left:146px;top:7px;font-size:6.8px;color:#333">Maintenance request details</div>
</div>
</body></html>
